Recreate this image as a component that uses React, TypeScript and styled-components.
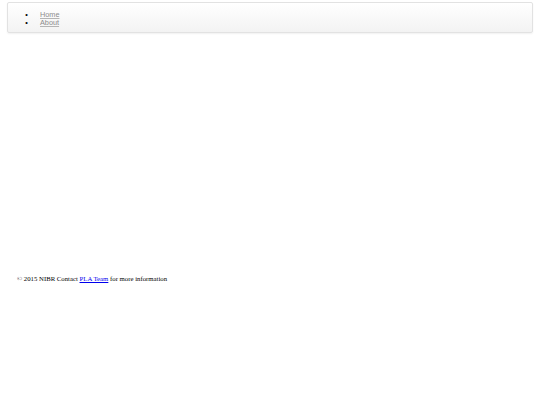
import React from "react";
import styled, { createGlobalStyle } from "styled-components";

const Global = createGlobalStyle`
  html, body { margin: 0; padding: 0; background: #fff; }
  body { font-family: "Liberation Serif", "Times New Roman", serif; }
`;

const Page = styled.div`
  width: 540px;
  height: 405px;
  box-sizing: border-box;
  padding: 2px 7px 0 7px;
  display: flex;
  flex-direction: column;
`;

const Navbar = styled.nav`
  height: 31px;
  box-sizing: border-box;
  border: 1px solid #e2e2e2;
  border-radius: 2px;
  background: linear-gradient(to bottom, #ffffff 0%, #f3f3f3 100%);
  box-shadow: inset 0 1px 0 rgba(255, 255, 255, 0.15), 0 1px 2px rgba(0, 0, 0, 0.06);
  display: flex;
  align-items: flex-start;
`;

const NavList = styled.ul`
  margin: 0;
  padding: 7.5px 0 0 32px;
  list-style: disc;
  font-family: "Liberation Sans", Arial, sans-serif;
  font-size: 7.3px;
  line-height: 8.5px;
  color: #000;
`;

const NavItem = styled.li`
  &::marker {
    content: "\\2022\\00a0\\00a0\\00a0\\00a0\\00a0\\00a0";
    font-family: "Liberation Sans", sans-serif;
    font-size: 7.3px;
  }
`;

const NavLink = styled.a`
  color: #8c8c8c;
  text-decoration: underline;
  text-decoration-color: #b4b4b4;
`;

const Spacer = styled.div`
  height: 241px;
`;

const Footer = styled.footer`
  padding-left: 10px;
  font-size: 6.75px;
  line-height: 9px;
  color: #000;
`;

const FooterLink = styled.a`
  color: #0000ee;
  text-decoration: underline;
`;

export default function App() {
  return (
    <>
      <Global />
      <Page>
        <Navbar>
          <NavList>
            <NavItem>
              <NavLink href="#">Home</NavLink>
            </NavItem>
            <NavItem>
              <NavLink href="#">About</NavLink>
            </NavItem>
          </NavList>
        </Navbar>
        <Spacer />
        <Footer>
          © 2015 NIBR Contact <FooterLink href="#">PLA Team</FooterLink> for more information
        </Footer>
      </Page>
    </>
  );
}
